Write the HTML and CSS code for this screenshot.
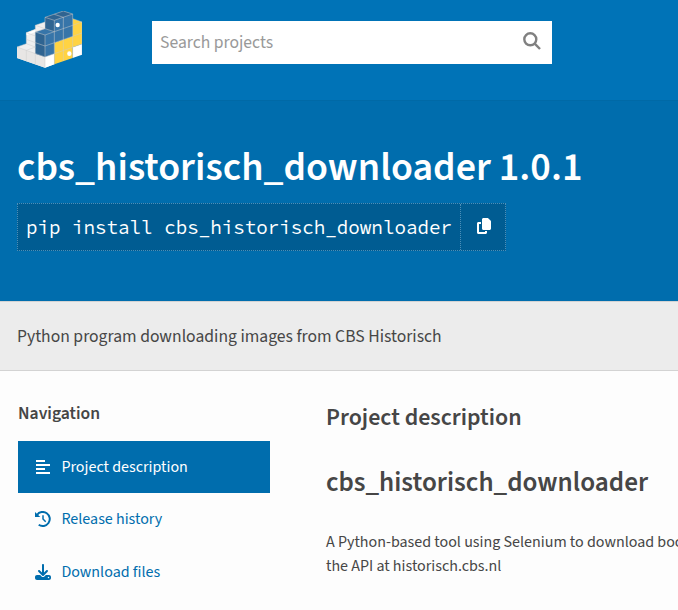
FILE: index.html
```html
<!DOCTYPE html>
<html lang="en">
<head>
<meta charset="utf-8">
<title>cbs_historisch_downloader</title>
<link rel="stylesheet" href="styles.css">
</head>
<body>
<header class="site-header">
  <svg class="logo" viewBox="51 33 195 171" aria-hidden="true">
    <path fill="#efefef" d="M51 141L79 131V98L106 88V76L135 66V86L163 95V193L135 203L51 174Z"/>
    <path fill="#e8e6e5" d="M51 141L135 171V203L51 174Z"/>
    <path fill="#fff" d="M135 171L163 161V193L135 203ZM218 142L246 132V164L218 174ZM79 98L106 88V96L79 106Z"/>
    <path fill="#ffd343" d="M163 128L218 109V56L246 66V132L218 142V174L163 193Z"/>
    <path fill="#3775a9" d="M106 96L135 86V52L190 33L218 42V109L163 128V161L135 171L106 161Z"/>
    <path fill="#2f6491" d="M106 96L135 105V171L106 161ZM135 52L163 61V95L135 86ZM135 52L190 33L218 42L163 61Z"/>
    <path class="seams" d="M51 141L135 171L163 161L246 132M51 141L79 131L106 141M79 151V184M106 161V193M135 171V203M79 151L106 141M79 131V98L106 108M79 118L106 128M79 98L106 88M106 88V76L135 86M106 76L135 66M106 96V161M106 96L135 105L163 95L135 86L106 96M135 105V171M106 128L135 138L246 99M163 61V193M190 51V183M218 42V174M135 52L163 61L218 42L190 33L135 52V86M163 43L190 52M163 95L218 76L246 66M218 56L246 66M246 66V164"/>
    <ellipse cx="173" cy="75" rx="6.5" ry="7" fill="#fff"/>
    <ellipse cx="208" cy="161" rx="6.5" ry="7" fill="#fff"/>
  </svg>
  <form class="search">
    <span class="placeholder">Search projects</span>
    <svg class="search-icon" viewBox="0 0 18 18" aria-hidden="true"><circle cx="7.3" cy="7.3" r="6" /><path d="M11.7 11.7L17 17"/></svg>
  </form>
</header>
<section class="banner">
  <h1 class="title">cbs_historisch_downloader 1.0.1</h1>
  <div class="install">
    <span class="command">pip install cbs_historisch_downloader</span>
    <span class="copy"><svg viewBox="0 0 448 512" aria-hidden="true"><path d="M208 0H332.100c12.700 0 24.900 5.100 33.900 14.100l67.900 67.900c9 9 14.100 21.200 14.100 33.900V336c0 26.500-21.500 48-48 48H208c-26.500 0-48-21.500-48-48V48c0-26.500 21.500-48 48-48zM48 128h80v64H64V448H256V416h64v48c0 26.500-21.500 48-48 48H48c-26.500 0-48-21.500-48-48V176c0-26.500 21.500-48 48-48z"/></svg></span>
  </div>
</section>
<p class="summary">Python program downloading images from CBS Historisch</p>
<main class="layout">
  <nav class="sidebar">
    <h2 class="nav-title">Navigation</h2>
    <a class="tab active"><svg viewBox="0 0 16 16" aria-hidden="true"><path d="M1 1h9v2H1zM1 5h14v2H1zM1 9h9v2H1zM1 13h14v2H1z"/></svg><span>Project description</span></a>
    <a class="tab"><svg viewBox="0 0 16 16" aria-hidden="true"><path class="line" d="M2 4A7 7 0 1 1 3.700 13.700"/><path d="M0 .9V6h5.300z"/><path class="hand" d="M8 4.300V8l2.700 2.700"/></svg><span>Release history</span></a>
    <a class="tab"><svg viewBox="0 0 512 512" aria-hidden="true"><path d="M288 32c0-17.700-14.300-32-32-32s-32 14.300-32 32V274.700l-73.400-73.400c-12.500-12.500-32.800-12.500-45.300 0s-12.500 32.800 0 45.300l128 128c12.500 12.500 32.800 12.500 45.300 0l128-128c12.500-12.500 12.500-32.800 0-45.300s-32.800-12.500-45.300 0L288 274.700V32zM64 352c-35.300 0-64 28.700-64 64v32c0 35.300 28.700 64 64 64H448c35.300 0 64-28.700 64-64V416c0-35.300-28.700-64-64-64H346.500l-45.300 45.300c-25 25-65.500 25-90.500 0L165.500 352H64zm368 56a24 24 0 1 1 0 48 24 24 0 1 1 0-48z"/></svg><span>Download files</span></a>
  </nav>
  <article class="content">
    <h2 class="section-title">Project description</h2>
    <h1 class="readme-title">cbs_historisch_downloader</h1>
    <p class="readme">A Python-based tool using Selenium to download boo<br>the API at historisch.cbs.nl</p>
  </article>
</main>
</body>
</html>
```
FILE: styles.css
```css
* { box-sizing: border-box; }
body {
  margin: 0;
  height: 610px;
  overflow: hidden;
  background: #fdfdfd;
  color: #464646;
  font-family: "Source Sans 3", "Noto Sans CJK JP", sans-serif;
  font-size: 16px;
  line-height: 24px;
  white-space: nowrap;
}
h1, h2, p { margin: 0; }
.site-header {
  display: flex;
  align-items: flex-start;
  height: 101px;
  padding: 11px 17px 0;
  background: #0073b7;
  border-bottom: 1px solid #0069a6;
}
.logo { width: 65px; height: 57px; margin-right: 70px; }
.seams { fill: none; stroke: #ccc; stroke-width: 2; stroke-opacity: .75; }
.search {
  display: flex;
  justify-content: space-between;
  align-items: center;
  width: 400px;
  height: 43px;
  margin-top: 10px;
  padding: 0 11px 0 8px;
  background: #fff;
}
.placeholder { color: #999; font-size: 17.600px; }
.search-icon { width: 18px; height: 18px; margin-bottom: 4px; fill: none; stroke: #808080; stroke-width: 2.400; }
.banner { height: 200px; padding: 42px 17px 0; background: #006dad; color: #fff; }
.title { font-size: 40px; line-height: 50px; font-weight: 600; }
.install { display: flex; width: 489px; height: 48px; margin-top: 10px; background: #005c92; border: 1px dotted #4d8fb8; }
.command { width: 443px; padding-left: 8px; line-height: 46px; font-family: "Source Code Pro", "Source Code 3", "Noto Sans Mono", "DejaVu Sans Mono", monospace; font-size: 19.200px; border-right: 1px dotted #4d8fb8; }
.copy { flex: 1; display: flex; align-items: center; justify-content: center; }
.copy svg { width: 14px; height: 16px; margin: 0 0 2px 1px; fill: #fff; }
.summary { height: 70px; padding-left: 17px; line-height: 70px; font-size: 17.600px; background: #ececec; border-top: 1px solid #d3d3d3; border-bottom: 1px solid #d3d3d3; }
.layout { display: grid; grid-template-columns: 252px auto; column-gap: 56px; padding: 31px 0 0 18px; }
.nav-title { font-size: 17.600px; font-weight: 600; margin-bottom: 15px; }
.tab { display: flex; align-items: center; gap: 10.400px; height: 52px; padding-left: 17px; margin-bottom: 1px; color: #006dad; }
.tab svg { width: 16px; height: 16px; fill: currentColor; }
.tab .line { fill: none; stroke: currentColor; stroke-width: 2; }
.tab .hand { fill: none; stroke: currentColor; stroke-width: 1.500; }
.active { background: #006dad; color: #fff; margin-bottom: 0; }
.section-title { font-size: 24px; line-height: 32px; font-weight: 600; }
.readme-title { font-size: 27.200px; line-height: 36px; font-weight: 600; margin-top: 31px; }
.readme { margin-top: 29px; font-size: 16px; }
```
